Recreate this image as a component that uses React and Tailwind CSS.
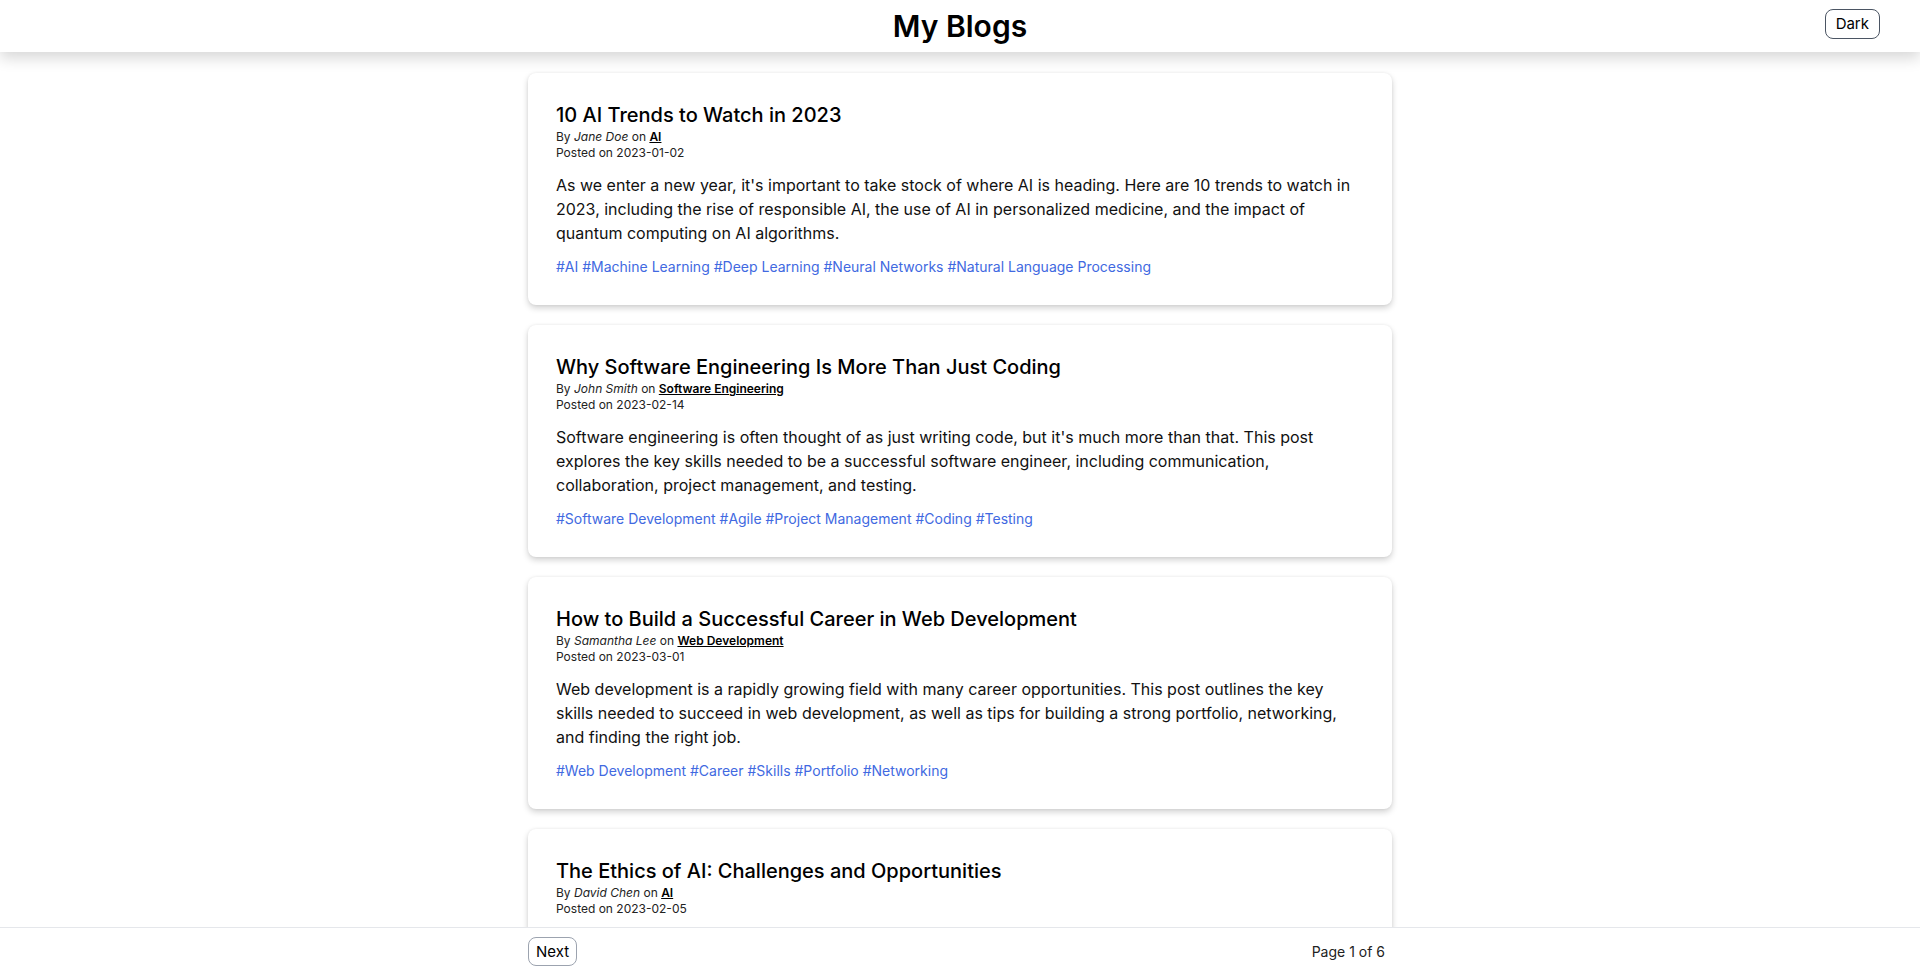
import React from "react";

const posts = [
  {
    title: "10 AI Trends to Watch in 2023",
    author: "Jane Doe",
    category: "AI",
    date: "2023-01-02",
    body: "As we enter a new year, it's important to take stock of where AI is heading. Here are 10 trends to watch in 2023, including the rise of responsible AI, the use of AI in personalized medicine, and the impact of quantum computing on AI algorithms.",
    tags: ["AI", "Machine Learning", "Deep Learning", "Neural Networks", "Natural Language Processing"],
  },
  {
    title: "Why Software Engineering Is More Than Just Coding",
    author: "John Smith",
    category: "Software Engineering",
    date: "2023-02-14",
    body: "Software engineering is often thought of as just writing code, but it's much more than that. This post explores the key skills needed to be a successful software engineer, including communication, collaboration, project management, and testing.",
    tags: ["Software Development", "Agile", "Project Management", "Coding", "Testing"],
  },
  {
    title: "How to Build a Successful Career in Web Development",
    author: "Samantha Lee",
    category: "Web Development",
    date: "2023-03-01",
    body: "Web development is a rapidly growing field with many career opportunities. This post outlines the key skills needed to succeed in web development, as well as tips for building a strong portfolio, networking, and finding the right job.",
    tags: ["Web Development", "Career", "Skills", "Portfolio", "Networking"],
  },
  {
    title: "The Ethics of AI: Challenges and Opportunities",
    author: "David Chen",
    category: "AI",
    date: "2023-02-05",
    body: "As AI becomes more prevalent in our lives, it raises important ethical questions. This post explores the challenges and opportunities of AI ethics, including bias, transparency, accountability, and privacy.",
    tags: ["AI", "Ethics", "Bias", "Transparency", "Privacy"],
  },
];

function Card({ p }) {
  return (
    <article className="bg-white rounded-lg p-7 shadow-[0_3px_6px_rgba(0,0,0,0.18),0_0_3px_rgba(0,0,0,0.06)]">
      <h2 className="text-xl leading-7 font-medium text-black">{p.title}</h2>
      <div className="text-xs leading-4 text-[#222]">
        By <em>{p.author}</em> on{" "}
        <a className="font-semibold underline text-black">{p.category}</a>
      </div>
      <div className="text-xs leading-4 text-[#222]">Posted on {p.date}</div>
      <p className="mt-3 text-base leading-6 text-[#111]">{p.body}</p>
      <div className="mt-3 text-sm leading-5 text-[#4169e1]">
        {p.tags.map((t) => "#" + t).join(" ")}
      </div>
    </article>
  );
}

export default function App() {
  return (
    <div
      className="h-screen flex flex-col bg-white overflow-hidden"
      style={{ fontFamily: "Inter, 'Noto Sans', sans-serif" }}
    >
      <header className="relative z-10 h-[52px] shrink-0 bg-white shadow-[0_6px_14px_rgba(0,0,0,0.16)] flex items-center justify-center">
        <h1 className="text-3xl leading-9 font-semibold text-black">My Blogs</h1>
        <button className="absolute right-10 top-[9px] h-[30px] px-2.5 rounded-lg border border-[#4b5563] text-[15px] text-black bg-white">
          Dark
        </button>
      </header>
      <main className="flex-1 min-h-0 overflow-hidden">
        <div className="max-w-4xl mx-auto px-4 pt-[21px] flex flex-col gap-5">
          {posts.map((p) => (
            <Card key={p.title} p={p} />
          ))}
        </div>
      </main>
      <footer className="h-[47px] shrink-0 border-t border-[#e5e7eb] bg-white">
        <div className="max-w-4xl mx-auto px-4 pt-[9px] flex items-center justify-between">
          <button className="h-[29px] px-[7px] rounded-lg border border-[#9ca3af] text-[15px] leading-6 text-black bg-white">
            Next
          </button>
          <span className="text-sm text-[#222] pr-[7px]">Page 1 of 6</span>
        </div>
      </footer>
    </div>
  );
}
